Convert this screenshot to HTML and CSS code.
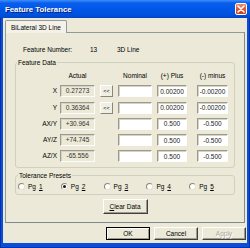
FILE: index.html
```html
<!DOCTYPE html>
<html>
<head>
  <link rel="stylesheet" href="styles.css">
</head>
<body>
  <div class="window">
    <div class="titlebar">
      <span class="title">Feature Tolerance</span>
      <span class="close">
        <svg width="8" height="8" viewBox="0 0 8 8"><path d="M1 1L7 7M7 1L1 7" stroke="#fff" stroke-width="1.6" stroke-linecap="round"/></svg>
      </span>
    </div>

    <div class="client">
      <div class="tabs">
        <span class="tab">BiLateral 3D Line</span>
      </div>

      <div class="panel">
        <div class="feature-number">
          <span class="fn-label">Feature Number:</span>
          <span class="fn-value">13</span>
          <span>3D Line</span>
        </div>

        <fieldset class="group data-group">
          <legend>Feature Data</legend>
          <div class="data-grid">
            <span></span>
            <span class="head">Actual</span>
            <span></span>
            <span class="head">Nominal</span>
            <span class="head">(+) Plus</span>
            <span class="head minus">(-) minus</span>

            <span class="lbl">X</span>
            <span class="actual">0.27273</span>
            <button class="copy">&lt;&lt;</button>
            <input class="field" type="text">
            <input class="field" type="text" value="0.00200">
            <input class="field minus" type="text" value="-0.00200">

            <span class="lbl">Y</span>
            <span class="actual">0.36364</span>
            <button class="copy">&lt;&lt;</button>
            <input class="field" type="text">
            <input class="field" type="text" value="0.00200">
            <input class="field minus" type="text" value="-0.00200">

            <span class="lbl">AX/Y</span>
            <span class="actual">+30.964</span>
            <span></span>
            <input class="field" type="text">
            <input class="field" type="text" value="0.500">
            <input class="field minus" type="text" value="-0.500">

            <span class="lbl">AY/Z</span>
            <span class="actual">+74.745</span>
            <span></span>
            <input class="field" type="text">
            <input class="field" type="text" value="0.500">
            <input class="field minus" type="text" value="-0.500">

            <span class="lbl">AZ/X</span>
            <span class="actual">-65.556</span>
            <span></span>
            <input class="field" type="text">
            <input class="field" type="text" value="0.500">
            <input class="field minus" type="text" value="-0.500">
          </div>
        </fieldset>

        <fieldset class="group presets">
          <legend>Tolerance Presets</legend>
          <div class="radio-row">
            <label class="radio-item"><span class="radio"></span>Pg <u>1</u></label>
            <label class="radio-item"><span class="radio checked"></span>Pg <u>2</u></label>
            <label class="radio-item"><span class="radio"></span>Pg <u>3</u></label>
            <label class="radio-item"><span class="radio"></span>Pg <u>4</u></label>
            <label class="radio-item"><span class="radio"></span>Pg <u>5</u></label>
          </div>
        </fieldset>

        <div class="clear-row">
          <button class="btn clear-btn"><u>C</u>lear Data</button>
        </div>
      </div>

      <div class="footer">
        <button class="btn default">OK</button>
        <button class="btn">Cancel</button>
        <button class="btn disabled">Apply</button>
      </div>
    </div>
  </div>
</body>
</html>
```

FILE: styles.css
```css
body {
  margin: 0;
  font-family: "Liberation Sans", Arial, sans-serif;
  font-size: 6.5px;
  color: #000;
}
.window {
  width: 250px;
  height: 248px;
  display: flex;
  flex-direction: column;
  box-sizing: border-box;
  padding-bottom: 4px;
  background: #0a4fdc;
  border-left: 1px solid #0831a8;
  border-right: 1px solid #0831a8;
  border-bottom: 1px solid #0831a8;
}
.titlebar {
  height: 18px;
  flex: none;
  display: flex;
  align-items: center;
  justify-content: space-between;
  background: linear-gradient(#3d8efd 0, #0a5eec 3px, #0057e8 50%, #0050dc 85%, #0045c8 100%);
  margin: 0 -1px;
}
.title {
  padding-left: 5px;
  color: #fff;
  font-weight: bold;
  font-size: 7.8px;
  text-shadow: 1px 1px #0a1a6a;
}
.close {
  width: 12px;
  height: 12px;
  margin-right: 3px;
  box-sizing: border-box;
  border: 1px solid #fff;
  border-radius: 2px;
  background: linear-gradient(#ec8a6c, #d8512b 60%, #c4401c);
  display: flex;
  align-items: center;
  justify-content: center;
}
.client {
  flex: 1;
  display: flex;
  flex-direction: column;
  margin: 0 2px;
  padding: 2px 0 3px;
  background: #ece9d8;
}
.tabs {
  display: flex;
  padding-left: 2px;
}
.tab {
  height: 13px;
  line-height: 13px;
  padding: 0 5px;
  background: #f4f2e8;
  border: 1px solid #919b9c;
  border-bottom: none;
  border-radius: 2px 2px 0 0;
  box-sizing: border-box;
  position: relative;
  margin-bottom: -1px;
  z-index: 1;
}
.panel {
  flex: 1;
  margin: 0 2px;
  padding: 12px 9px 8px;
  border: 1px solid #919b9c;
  border-right-color: #7f8a8b;
  border-bottom-color: #7f8a8b;
  display: flex;
  flex-direction: column;
}
.feature-number {
  display: flex;
  height: 9px;
  line-height: 9px;
  margin-left: 8px;
}
.fn-label {
  width: 67px;
}
.fn-value {
  width: 27px;
}
.group {
  margin: 0;
  border: 1px solid #d0d0bf;
  border-radius: 3px;
  min-width: 0;
}
.group legend {
  padding: 0 1px;
  line-height: 9px;
}
.data-group {
  margin-top: 4px;
  padding: 4px 4px 4.5px;
}
.data-group legend {
  margin-left: -3px;
}
.data-grid {
  display: grid;
  grid-template-columns: 35px 35px 13px 34px 30px 36px;
  grid-template-rows: 10px repeat(5, 12px);
  column-gap: 5px;
  row-gap: 4.25px;
}
.head {
  text-align: center;
  line-height: 10px;
}
.minus {
  justify-self: end;
  width: 31px;
}
.lbl {
  text-align: right;
  line-height: 12px;
  margin-right: -2px;
}
.actual,
.field {
  box-sizing: border-box;
  height: 12px;
  line-height: 10px;
  text-align: center;
  border: 1px solid;
  border-color: #9d9a8c #fdfdfb #fdfdfb #9d9a8c;
  box-shadow: inset 1px 1px #d6d3c4;
}
.actual {
  background: #ece9d8;
  color: #333;
}
.field {
  width: 100%;
  padding: 0;
  margin: 0;
  background: #fff;
  font: inherit;
  color: #222;
  outline: none;
}
.field.minus {
  width: 31px;
}
.copy {
  box-sizing: border-box;
  height: 12px;
  padding: 0;
  margin: 0;
  font: inherit;
  font-size: 5.5px;
  background: #f1efe4;
  border: 1px solid;
  border-color: #fff #8a877a #8a877a #fff;
}
.presets {
  margin-top: 3px;
  padding: 1.75px 2px 3px;
}
.radio-row {
  display: flex;
  height: 9px;
  align-items: center;
}
.radio-item {
  width: 48px;
  display: flex;
  align-items: center;
  gap: 3px;
}
.radio {
  width: 7px;
  height: 7px;
  box-sizing: border-box;
  border-radius: 50%;
  border: 1px solid;
  border-color: #8a877a #e4e2d6 #e4e2d6 #8a877a;
  background: #fff;
  display: flex;
  align-items: center;
  justify-content: center;
}
.radio.checked:after {
  content: "";
  width: 3px;
  height: 3px;
  border-radius: 50%;
  background: #1a1a1a;
}
.clear-row {
  display: flex;
  justify-content: center;
  margin-top: 4.5px;
}
.btn {
  box-sizing: border-box;
  padding: 0;
  margin: 0;
  font: inherit;
  color: #000;
  background: #ece9d8;
  border: 1px solid;
  border-color: #fff #404040 #404040 #fff;
  box-shadow: inset -1px -1px #9d9a8c;
}
.clear-btn {
  width: 45px;
  height: 15px;
}
.footer {
  display: flex;
  justify-content: flex-end;
  gap: 4px;
  margin-top: 4px;
  padding-right: 1px;
}
.footer .btn {
  width: 44px;
  height: 13px;
}
.btn.default {
  border-color: #000;
  box-shadow: inset 1px 1px #fff, inset -1px -1px #9d9a8c;
}
.btn.disabled {
  color: #aca899;
  text-shadow: 1px 1px #fff;
}
```
